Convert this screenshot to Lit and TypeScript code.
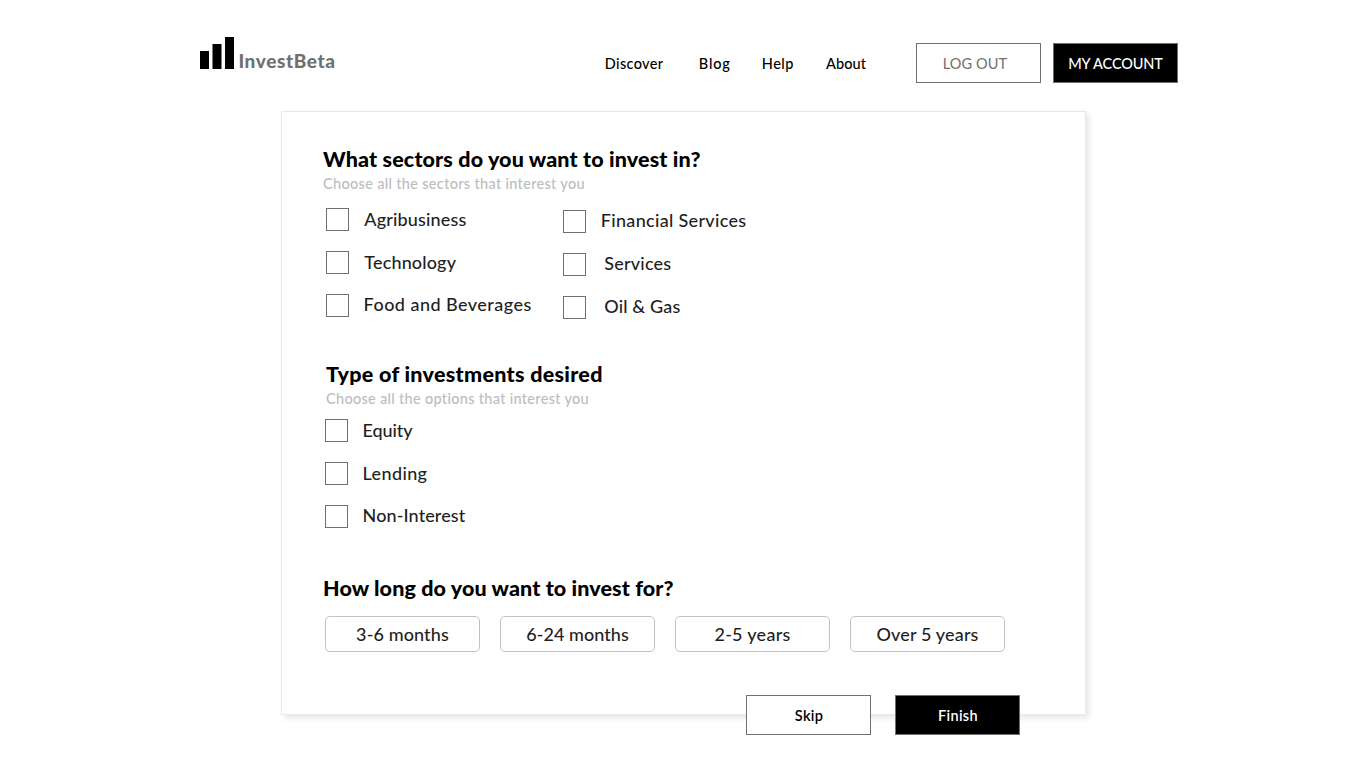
import { LitElement, html, css } from "lit";
import { customElement, property } from "lit/decorators.js";
import { styleMap } from "lit/directives/style-map.js";

type Label = { text: string; track: number };

const tracked = (l: Label) =>
  html`<span style=${styleMap({ letterSpacing: `${l.track}px` })}>${l.text}</span>`;

const SECTORS_LEFT: Label[] = [
  { text: "Agribusiness", track: 0.15 },
  { text: "Technology", track: 0.16 },
  { text: "Food and Beverages", track: 0.46 },
];
const SECTORS_RIGHT: Label[] = [
  { text: "Financial Services", track: 0.32 },
  { text: "Services", track: 0.22 },
  { text: "Oil & Gas", track: 0.16 },
];
const TYPES: Label[] = [
  { text: "Equity", track: -0.1 },
  { text: "Lending", track: 0.36 },
  { text: "Non-Interest", track: 0.1 },
];
const TERMS: Label[] = [
  { text: "3-6 months", track: 0.12 },
  { text: "6-24 months", track: 0.06 },
  { text: "2-5 years", track: 0.28 },
  { text: "Over 5 years", track: 0.16 },
];

@customElement("check-list")
export class CheckList extends LitElement {
  @property({ attribute: false }) items: Label[] = [];

  static styles = css`
    :host { display: flex; flex-direction: column; gap: 20px; }
    .row { display: flex; height: 23px; color: #1f1f1f; font-size: 18px; font-weight: 500; line-height: 23px; white-space: nowrap; }
    .box { box-sizing: border-box; flex: none; width: 23px; height: 23px; border: 1px solid #707070; background: #fff; }
    .label { margin-left: 15.3px; }
    :host(.spaced) .label { margin: -1px 0 0 18.2px; }
    :host(.spaced) .row:first-child .label { margin-left: 14.8px; }
    :host(:not(.spaced)) .row:last-child .label { margin: -1px 0 0 14.6px; }
    :host(.types) .row .label { margin-left: 14.6px; }
  `;

  render() {
    return this.items.map(
      (i) => html`<div class="row"><span class="box"></span><span class="label">${tracked(i)}</span></div>`
    );
  }
}

@customElement("app-root")
export class AppRoot extends LitElement {
  static styles = css`
    :host { display: block; height: 768px; overflow: hidden; background: #fff; color: #000; font-family: Lato, "Open Sans", sans-serif; }
    header { display: flex; height: 111px; box-sizing: border-box; padding: 37px 0 0 200px; }
    .logo { display: flex; width: 404.8px; }
    .bars { display: block; width: 34px; height: 32px; }
    .brand { margin: 14px 0 0 4.4px; font-size: 19px; font-weight: 900; line-height: 20px; color: #707070; letter-spacing: 0.6px; }
    nav { display: flex; width: 311.2px; padding-top: 17px; font-size: 14.5px; font-weight: 500; line-height: 20px; white-space: nowrap; }
    .discover { width: 94px; letter-spacing: 0.35px; }
    .blog { width: 63px; letter-spacing: 0.8px; }
    .help { width: 64.2px; letter-spacing: 0.5px; }
    .about { letter-spacing: 0.1px; }
    .account { display: flex; gap: 12px; padding-top: 6px; }
    .btn { display: block; box-sizing: border-box; width: 125px; height: 40px; border: 1px solid #707070; background: #fff; color: #000; text-align: center; font-size: 14.5px; line-height: 40px; font-weight: 500; white-space: nowrap; }
    .dark { background: #000; color: #fff; }
    .logout { color: #707070; font-weight: 400; letter-spacing: 0.14px; padding-right: 7px; }
    .mine { letter-spacing: -0.12px; }
    main { box-sizing: border-box; width: 805px; height: 604px; margin-left: 281px; border: 1px solid #e9e9e9; background: #fff; box-shadow: 3px 3px 6px rgba(0, 0, 0, 0.1); padding: 34px 0 0 41px; }
    h2 { margin: 0; font-size: 21.5px; line-height: 26px; font-weight: 900; white-space: nowrap; }
    .hint { margin: 2px 0 0; font-size: 14.5px; line-height: 20px; font-weight: 500; color: #bdbdbd; white-space: nowrap; }
    .sectors { height: 215px; }
    .types { height: 214px; }
    .types h2, .types .hint { padding-left: 3px; }
    .columns { display: flex; padding: 14px 0 0 3px; }
    .columns check-list { width: 237px; }
    .columns .spaced { margin-top: 2px; }
    .types check-list { height: auto; margin: 10px 0 0 2px; }
    .terms { display: flex; gap: 20px; margin: 15px 0 0 2px; }
    .term { box-sizing: border-box; width: 155px; height: 36px; border: 1px solid #c2c2c2; border-radius: 5px; text-align: center; font-size: 18px; font-weight: 500; line-height: 35px; color: #1f1f1f; white-space: nowrap; }
    .actions { display: flex; gap: 24px; margin: 43px 0 0 423px; }
    .actions .btn { font-weight: 600; letter-spacing: 0.34px; line-height: 39px; padding-left: 1px; }
  `;

  render() {
    return html`
      <header>
        <div class="logo">
          <svg class="bars" viewBox="0 0 34 32" aria-hidden="true">
            <rect x="0" y="14" width="9" height="18" />
            <rect x="12.5" y="7" width="9" height="25" />
            <rect x="25" y="0" width="9" height="32" />
          </svg>
          <span class="brand">InvestBeta</span>
        </div>
        <nav>
          <span class="discover">Discover</span><span class="blog">Blog</span>
          <span class="help">Help</span><span class="about">About</span>
        </nav>
        <div class="account">
          <span class="btn logout">LOG OUT</span>
          <span class="btn dark mine">MY ACCOUNT</span>
        </div>
      </header>
      <main>
        <section class="sectors">
          <h2>${tracked({ text: "What sectors do you want to invest in?", track: 0.14 })}</h2>
          <p class="hint">${tracked({ text: "Choose all the sectors that interest you", track: 0.32 })}</p>
          <div class="columns">
            <check-list .items=${SECTORS_LEFT}></check-list>
            <check-list class="spaced" .items=${SECTORS_RIGHT}></check-list>
          </div>
        </section>
        <section class="types">
          <h2>${tracked({ text: "Type of investments desired", track: 0.29 })}</h2>
          <p class="hint">${tracked({ text: "Choose all the options that interest you", track: 0.3 })}</p>
          <check-list class="types" .items=${TYPES}></check-list>
        </section>
        <section>
          <h2>${tracked({ text: "How long do you want to invest for?", track: 0.11 })}</h2>
          <div class="terms">${TERMS.map((t) => html`<span class="term">${tracked(t)}</span>`)}</div>
        </section>
        <div class="actions">
          <span class="btn">Skip</span><span class="btn dark">Finish</span>
        </div>
      </main>
    `;
  }
}
